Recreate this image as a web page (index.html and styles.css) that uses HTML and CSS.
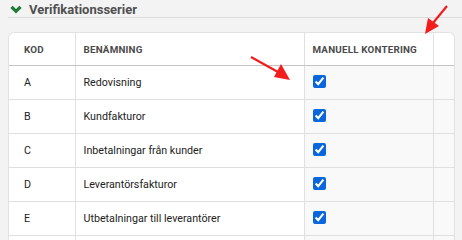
FILE: index.html
```html
<!DOCTYPE html>
<html lang="sv">
<head>
<meta charset="utf-8">
<link rel="stylesheet" href="styles.css">
</head>
<body>
<div class="page">
  <div class="section-head">
    <svg class="chev" width="12" height="9" viewBox="0 0 12 9"><polyline points="1.5,1.8 6,6.3 10.5,1.8" fill="none" stroke="#1d7a32" stroke-width="3.2"/></svg>
    <span class="section-title">Verifikationsserier</span>
  </div>
  <div class="card">
    <table class="grid">
      <colgroup>
        <col class="c-kod"><col class="c-ben"><col class="c-man"><col class="c-x">
      </colgroup>
      <thead>
        <tr><th class="kod">KOD</th><th>BENÄMNING</th><th>MANUELL KONTERING</th><th></th></tr>
      </thead>
      <tbody>
        <tr><td class="kod">A</td><td>Redovisning</td><td class="shade"><input type="checkbox" checked></td><td class="shade"></td></tr>
        <tr><td class="kod">B</td><td>Kundfakturor</td><td class="shade"><input type="checkbox" checked></td><td class="shade"></td></tr>
        <tr><td class="kod">C</td><td>Inbetalningar från kunder</td><td class="shade"><input type="checkbox" checked></td><td class="shade"></td></tr>
        <tr><td class="kod">D</td><td>Leverantörsfakturor</td><td class="shade"><input type="checkbox" checked></td><td class="shade"></td></tr>
        <tr><td class="kod">E</td><td>Utbetalningar till leverantörer</td><td class="shade"><input type="checkbox" checked></td><td class="shade"></td></tr>
        <tr><td class="kod"></td><td></td><td class="shade"></td><td class="shade"></td></tr>
      </tbody>
    </table>
  </div>
  <svg class="arrows" width="462" height="240" viewBox="0 0 462 240">
    <g fill="#f21d1d" stroke="#f21d1d">
      <line x1="447" y1="6" x2="433" y2="23" stroke-width="2.2"/>
      <polygon points="425,34 428,18 439,26" stroke="none"/>
      <line x1="251" y1="57" x2="278" y2="72" stroke-width="2.2"/>
      <polygon points="290,80 274,77 281,64" stroke="none"/>
    </g>
  </svg>
</div>
</body>
</html>
```

FILE: styles.css
```css
html, body {
  margin: 0;
  padding: 0;
  background: #f3f3f3;
}
.page {
  position: relative;
  width: 462px;
  height: 240px;
  overflow: hidden;
  font-family: Roboto, "Liberation Sans", sans-serif;
  color: #222;
}
.section-head {
  display: flex;
  align-items: center;
  gap: 7px;
  margin-left: 8px;
  padding: 2px 0 0 2px;
  height: 15px;
  border-bottom: 1px solid #dcdcdc;
}
.chev {
  display: block;
}
.section-title {
  font-size: 13px;
  font-weight: 700;
  color: #505050;
  line-height: 15px;
}
.card {
  margin: 14px 0 0 8px;
  width: 447px;
  background: #fff;
  border: 1px solid #e2e2e2;
  border-bottom: none;
  border-radius: 6px 6px 0 0;
  overflow: hidden;
  box-sizing: border-box;
}
.grid {
  width: 100%;
  border-collapse: collapse;
  table-layout: fixed;
}
.c-kod { width: 66px; }
.c-ben { width: 229px; }
.c-man { width: 129px; }
.c-x { width: auto; }
th {
  height: 32px;
  padding: 0 8px;
  text-align: left;
  font-size: 9.8px;
  font-weight: 700;
  color: #4a4a4a;
  letter-spacing: 0.2px;
  border-left: 1px solid #e0e0e0;
  border-bottom: 1px solid #c4c4c4;
}
td {
  height: 33px;
  padding: 0 8px;
  font-size: 10.7px;
  color: #222;
  border-left: 1px solid #e0e0e0;
  border-bottom: 1px solid #e0e0e0;
  vertical-align: middle;
}
th:first-child, td:first-child {
  border-left: none;
}
.kod {
  padding-left: 15px;
}
.shade {
  background: #f9f9f9;
}
input[type="checkbox"] {
  margin: 0 0 3px 0;
  width: 13px;
  height: 13px;
  vertical-align: middle;
  accent-color: #0a66dc;
}
.arrows {
  position: absolute;
  left: 0;
  top: 0;
  pointer-events: none;
}
```
